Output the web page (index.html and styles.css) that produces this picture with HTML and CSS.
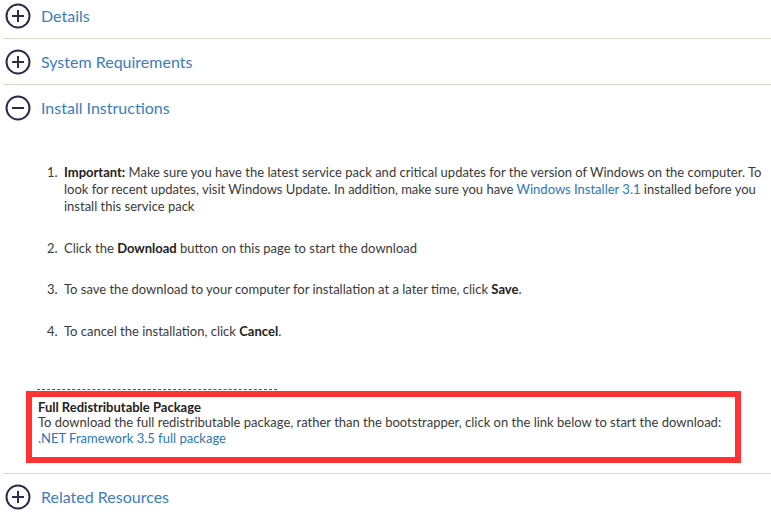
FILE: index.html
```html
<!DOCTYPE html>
<html lang="en">
<head>
  <meta charset="UTF-8">
  <meta name="viewport" content="width=device-width, initial-scale=1.0">
  <title>Download Details</title>
  <link rel="stylesheet" href="styles.css">
</head>
<body>
  <div class="page">
    <div class="section">
      <div class="section-head">
        <svg class="toggle" width="26" height="26" viewBox="0 0 26 26"><circle cx="13" cy="13" r="11.5"/><path d="M7 13h12M13 7v12"/></svg>
        <span>Details</span>
      </div>
    </div>

    <div class="section">
      <div class="section-head">
        <svg class="toggle" width="26" height="26" viewBox="0 0 26 26"><circle cx="13" cy="13" r="11.5"/><path d="M7 13h12M13 7v12"/></svg>
        <span>System Requirements</span>
      </div>
    </div>

    <div class="section">
      <div class="section-head">
        <svg class="toggle" width="26" height="26" viewBox="0 0 26 26"><circle cx="13" cy="13" r="11.5"/><path d="M7 13h12"/></svg>
        <span>Install Instructions</span>
      </div>
      <div class="section-body">
        <ol class="steps">
          <li><b>Important:</b> Make sure you have the latest service pack and critical updates for the version of Windows on the computer. To look for recent updates, visit Windows Update. In addition, make sure you have <a href="#">Windows Installer 3.1</a> installed before you install this service pack</li>
          <li>Click the <b>Download</b> button on this page to start the download</li>
          <li>To save the download to your computer for installation at a later time, click <b>Save</b>.</li>
          <li>To cancel the installation, click <b>Cancel</b>.</li>
        </ol>
        <div class="dashes"></div>
        <div class="package">
          <b>Full Redistributable Package</b><br>
          To download the full redistributable package, rather than the bootstrapper, click on the link below to start the download:<br>
          <a href="#">.NET Framework 3.5 full package</a>
        </div>
      </div>
    </div>

    <div class="section">
      <div class="section-head">
        <svg class="toggle" width="26" height="26" viewBox="0 0 26 26"><circle cx="13" cy="13" r="11.5"/><path d="M7 13h12M13 7v12"/></svg>
        <span>Related Resources</span>
      </div>
    </div>
  </div>
</body>
</html>
```

FILE: styles.css
```css
body {
  margin: 0;
  font-family: Lato, 'Open Sans', sans-serif;
  background: #fff;
  color: #3a3a3a;
  overflow: hidden;
}

.page {
  margin-top: -7px;
  margin-left: 3px;
}

.section {
  border-bottom: 1px solid #ddd5c8;
}

.section:last-child {
  border-bottom: none;
}

.section-head {
  display: flex;
  align-items: center;
  height: 45px;
  gap: 10px;
  padding-left: 2px;
}

.section-head span {
  font-size: 16px;
  color: #3b7dbd;
}

.toggle {
  flex: none;
  fill: none;
  stroke: #2d2b4a;
  stroke-width: 2;
}

.section-body {
  padding: 34px 0 10px 0;
}

.steps {
  margin: 0;
  padding-left: 58px;
  padding-right: 6px;
  font-size: 13px;
  line-height: 17px;
}

.steps li {
  margin-bottom: 24.5px;
  padding-left: 3px;
}

.steps b {
  font-weight: 700;
  color: #222;
}

a {
  color: #2a78b8;
  text-decoration: none;
}

.dashes {
  width: 240px;
  margin: 49px 0 0 34px;
  border-top: 1px dashed #555;
}

.package {
  margin: 1px 30px 0 23px;
  border: 6px solid #ff3333;
  padding: 3px 6px 11px;
  font-size: 13px;
  line-height: 15.5px;
}

.package b {
  font-weight: 700;
  color: #222;
}
```
